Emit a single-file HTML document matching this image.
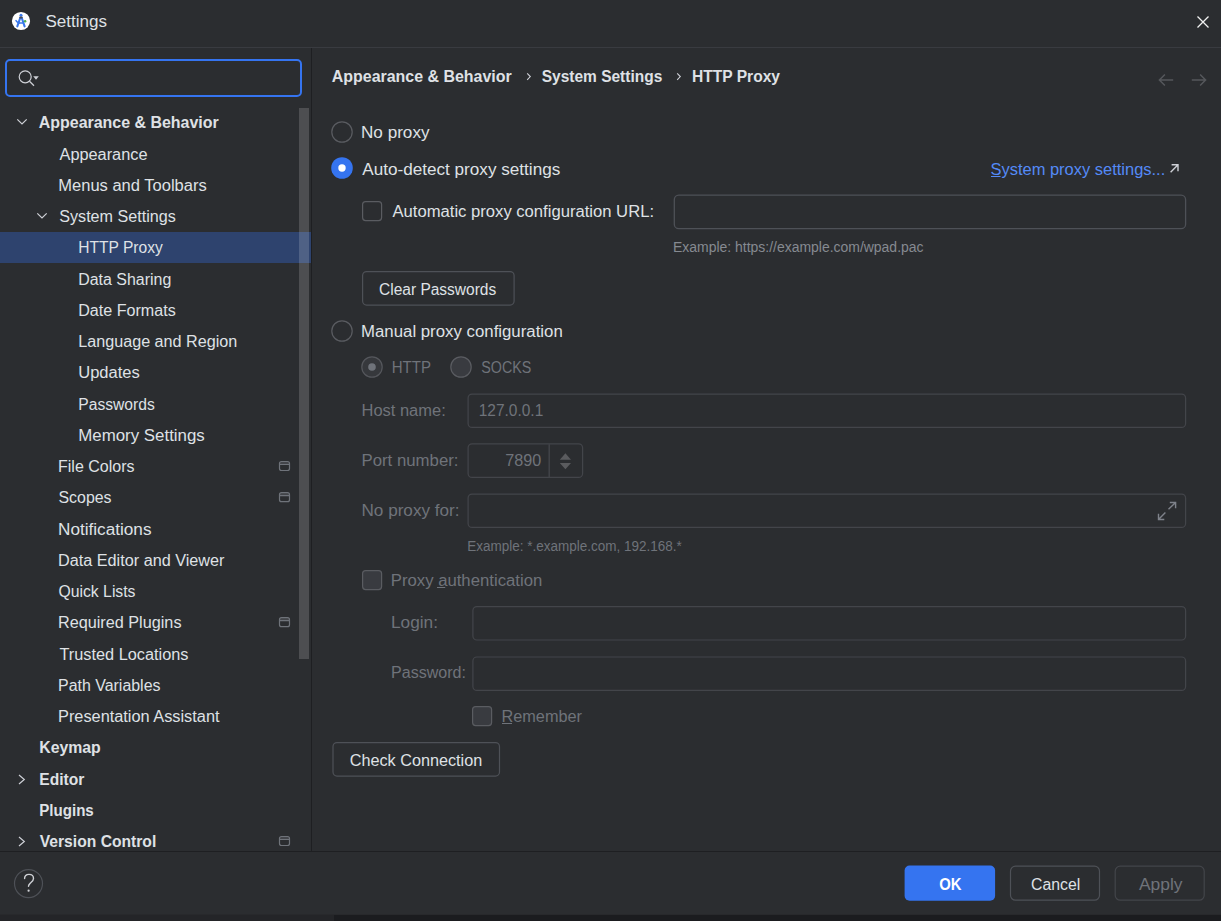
<!DOCTYPE html>
<html><head><meta charset="utf-8"><title>Settings</title>
<style>html,body{margin:0;padding:0;background:#2B2D30;overflow:hidden;width:1221px;height:921px}svg{display:block}text{font-family:"Liberation Sans",sans-serif}</style></head>
<body><svg width="1221" height="921" viewBox="0 0 1221 921">
<rect x="0" y="0" width="1221" height="921" fill="#2B2D30"/>
<!-- bottom strip -->
<rect x="0" y="915" width="334" height="6" fill="#242528"/>
<rect x="334" y="915" width="887" height="6" fill="#1B1C1F"/>
<rect x="0" y="914" width="1221" height="1" fill="#28292C"/>
<!-- title bar -->
<circle cx="21" cy="21" r="9.1" fill="#FFFFFF"/>
<g stroke="#3A78EC" stroke-linecap="round" fill="none">
  <path d="M20.2 18 L17.3 26.3 M21.8 18 L24.6 26.3" stroke-width="2.1"/>
  <path d="M18.6 22.9 H23.4" stroke-width="1.5"/>
  <path d="M16 20.6 Q17.2 22.6 19 22.9" stroke-width="1.5"/>
</g>
<circle cx="21" cy="15.2" r="1.5" fill="#3A78EC"/>
<rect x="19.3" y="16.4" width="3.4" height="2.2" rx="0.8" fill="#4A4D55"/>
<circle cx="25.1" cy="21.3" r="1.25" fill="#4CAF50"/>
<path d="M1197.5 16.5 L1208.5 27.5 M1208.5 16.5 L1197.5 27.5" stroke="#F2F2F2" stroke-width="1.3"/>
<rect x="0" y="47" width="1221" height="1" fill="#393B40"/>
<!-- search -->
<rect x="6" y="60" width="295" height="36" rx="4" ry="4" fill="#2B2D30" stroke="#3574F0" stroke-width="2"/>
<circle cx="25.2" cy="76.8" r="6" fill="none" stroke="#CED0D6" stroke-width="1.2"/>
<path d="M29.5 81.3 L34 85.8" stroke="#CED0D6" stroke-width="1.3"/>
<path d="M33.2 76.3 L38.8 76.3 L36 79.7 Z" fill="#CED0D6"/>
<!-- tree selection -->
<rect x="0" y="232" width="311" height="31" fill="#2E436E"/>
<!-- scrollbar thumb -->
<rect x="299" y="108" width="10" height="551" fill="#FFFFFF" fill-opacity="0.16"/>
<!-- tree separator -->
<rect x="311" y="48" width="1" height="803" fill="#1E1F22"/>
<!-- chevrons -->
<g stroke="#CED0D6" stroke-width="1.2" fill="none">
  <path d="M17.3 119.3 L22 124 L26.7 119.3"/>
  <path d="M37.3 213.3 L42 218 L46.7 213.3"/>
  <path d="M19 775 L24.3 779.5 L19 784"/>
  <path d="M19 837 L24.3 841.5 L19 846"/>
</g>
<!-- project icons -->
<g fill="#6F737A" fill-opacity="0.35"><rect x="280" y="462" width="9" height="2.5"/><rect x="280" y="493.2" width="9" height="2.5"/><rect x="280" y="618.2" width="9" height="2.5"/><rect x="280" y="837" width="9" height="2.5"/></g>
<g fill="none" stroke="#6F737A" stroke-width="1.2">
  <rect x="279.5" y="461.5" width="10" height="9" rx="2"/>
  <rect x="279.5" y="492.7" width="10" height="9" rx="2"/>
  <rect x="279.5" y="617.7" width="10" height="9" rx="2"/>
  <rect x="279.5" y="836.5" width="10" height="9" rx="2"/>
  <path d="M279.5 464.5 H289.5 M279.5 495.7 H289.5 M279.5 620.7 H289.5 M279.5 839.5 H289.5"/>
</g>
<!-- footer line -->
<rect x="0" y="851" width="1221" height="1" fill="#1E1F22"/>
<!-- breadcrumb separators -->
<g stroke="#CED0D6" stroke-width="1.1" fill="none">
  <path d="M527.2 73.3 L530.3 76.6 L527.2 79.9"/>
  <path d="M677.2 73.3 L680.3 76.6 L677.2 79.9"/>
</g>
<!-- nav arrows -->
<g stroke="#55575B" stroke-width="1.5" fill="none">
  <path d="M1173.2 80 H1159.8 M1164.9 74.5 L1159.4 80 L1164.9 85.5"/>
  <path d="M1191.8 80 H1205.2 M1200.1 74.5 L1205.6 80 L1200.1 85.5"/>
</g>
<!-- radios -->
<circle cx="342" cy="132" r="10.2" fill="none" stroke="#5A5C61" stroke-width="1.2"/>
<circle cx="342" cy="168" r="10.8" fill="#3574F0"/>
<circle cx="342" cy="168" r="3.7" fill="#FFFFFF"/>
<circle cx="342" cy="331" r="10.2" fill="none" stroke="#5A5C61" stroke-width="1.2"/>
<circle cx="372" cy="367" r="10.2" fill="#36383C" stroke="#55575C" stroke-width="1.2"/>
<circle cx="372" cy="367" r="3.8" fill="#6F737A"/>
<circle cx="461" cy="367" r="10.2" fill="#393B40" stroke="#5A5C61" stroke-width="1.2"/>
<!-- link arrow -->
<path d="M1170.6 172.2 L1178 164.8 M1171.6 164.8 H1178 V171.2" stroke="#CED0D6" stroke-width="1.4" fill="none"/>
<rect x="991" y="176" width="9.5" height="1" fill="#548AF7"/>
<!-- checkboxes -->
<rect x="362.6" y="201.6" width="19" height="19" rx="3" fill="none" stroke="#5A5C61" stroke-width="1.2"/>
<rect x="362.6" y="570.6" width="19" height="19" rx="3" fill="#393B40" stroke="#5A5C61" stroke-width="1.2"/>
<rect x="472.6" y="706.6" width="19" height="19" rx="3" fill="#393B40" stroke="#5A5C61" stroke-width="1.2"/>
<rect x="437" y="587" width="8.2" height="1" fill="#6F737A"/>
<rect x="502" y="723" width="10" height="1" fill="#6F737A"/>
<!-- fields -->
<rect x="674.3" y="195.2" width="511.3" height="33.5" rx="4.5" fill="none" stroke="#4E5157" stroke-width="1.3"/>
<rect x="468.1" y="394.1" width="717.5" height="33.3" rx="4" fill="none" stroke="#43454A" stroke-width="1.2"/>
<rect x="468.1" y="443.8" width="114.5" height="33.6" rx="4" fill="none" stroke="#43454A" stroke-width="1.2"/>
<rect x="548.5" y="444.2" width="1.4" height="33" fill="#43454A"/>
<path d="M559.8 459.7 L565.4 453.2 L571 459.7 Z M559.8 463 L565.4 469.2 L571 463 Z" fill="#5A5B5E"/>
<rect x="468.1" y="494.1" width="717.5" height="33.3" rx="4" fill="none" stroke="#43454A" stroke-width="1.2"/>
<g stroke="#7E828A" stroke-width="1.4" fill="none">
  <path d="M1168.5 509.3 L1175.6 502.4 M1169.8 502.5 H1175.6 V508.2"/>
  <path d="M1165.4 512.6 L1158.5 519.5 M1158.5 513.7 V519.5 H1164.3"/>
</g>
<rect x="472.9" y="606.6" width="712.7" height="33.4" rx="4" fill="none" stroke="#43454A" stroke-width="1.2"/>
<rect x="472.9" y="657" width="712.7" height="33.4" rx="4" fill="none" stroke="#43454A" stroke-width="1.2"/>
<!-- buttons -->
<rect x="362.6" y="271.6" width="151.5" height="33.5" rx="4" fill="none" stroke="#4E5157" stroke-width="1.2"/>
<rect x="333" y="742.6" width="166.5" height="33.5" rx="4" fill="none" stroke="#4E5157" stroke-width="1.2"/>
<rect x="904.6" y="865.5" width="90.5" height="35.3" rx="5" fill="#3574F0"/>
<rect x="1010.5" y="866.2" width="89" height="34" rx="5" fill="none" stroke="#4E5157" stroke-width="1.2"/>
<rect x="1115.2" y="866.2" width="89" height="34" rx="5" fill="none" stroke="#43454A" stroke-width="1.2"/>
<!-- help -->
<circle cx="28.5" cy="883.6" r="14" fill="none" stroke="#4E5157" stroke-width="1.2"/>
<path d="M24.6 878.6 C24.6 876 26.6 874.4 29 874.4 C31.6 874.4 33.5 876.1 33.5 878.4 C33.5 880.6 31.8 881.7 30.2 883.2 C29 884.4 28.5 885.2 28.5 886.2" fill="none" stroke="#CFD1D6" stroke-width="1.4" stroke-linecap="round"/>
<circle cx="28.6" cy="890.7" r="1.1" fill="#CFD1D6"/>
<text x="45.50" y="27.00" textLength="61.50" lengthAdjust="spacingAndGlyphs" font-size="16" font-weight="400" fill="#DFE1E5">Settings</text><text x="38.75" y="128.00" textLength="180.00" lengthAdjust="spacingAndGlyphs" font-size="16" font-weight="700" fill="#DFE1E5">Appearance &amp; Behavior</text><text x="59.50" y="160.00" textLength="88.00" lengthAdjust="spacingAndGlyphs" font-size="16" font-weight="400" fill="#DFE1E5">Appearance</text><text x="58.25" y="191.00" textLength="148.50" lengthAdjust="spacingAndGlyphs" font-size="16" font-weight="400" fill="#DFE1E5">Menus and Toolbars</text><text x="59.25" y="222.00" textLength="116.50" lengthAdjust="spacingAndGlyphs" font-size="16" font-weight="400" fill="#DFE1E5">System Settings</text><text x="78.25" y="253.00" textLength="84.50" lengthAdjust="spacingAndGlyphs" font-size="16" font-weight="400" fill="#DFE1E5">HTTP Proxy</text><text x="78.25" y="285.00" textLength="93.00" lengthAdjust="spacingAndGlyphs" font-size="16" font-weight="400" fill="#DFE1E5">Data Sharing</text><text x="78.25" y="316.00" textLength="97.50" lengthAdjust="spacingAndGlyphs" font-size="16" font-weight="400" fill="#DFE1E5">Date Formats</text><text x="78.25" y="347.00" textLength="159.00" lengthAdjust="spacingAndGlyphs" font-size="16" font-weight="400" fill="#DFE1E5">Language and Region</text><text x="78.25" y="378.00" textLength="61.50" lengthAdjust="spacingAndGlyphs" font-size="16" font-weight="400" fill="#DFE1E5">Updates</text><text x="78.25" y="410.00" textLength="76.50" lengthAdjust="spacingAndGlyphs" font-size="16" font-weight="400" fill="#DFE1E5">Passwords</text><text x="78.25" y="441.00" textLength="126.50" lengthAdjust="spacingAndGlyphs" font-size="16" font-weight="400" fill="#DFE1E5">Memory Settings</text><text x="58.00" y="472.00" textLength="76.50" lengthAdjust="spacingAndGlyphs" font-size="16" font-weight="400" fill="#DFE1E5">File Colors</text><text x="58.50" y="503.00" textLength="53.00" lengthAdjust="spacingAndGlyphs" font-size="16" font-weight="400" fill="#DFE1E5">Scopes</text><text x="58.00" y="535.00" textLength="93.50" lengthAdjust="spacingAndGlyphs" font-size="16" font-weight="400" fill="#DFE1E5">Notifications</text><text x="58.00" y="566.00" textLength="166.50" lengthAdjust="spacingAndGlyphs" font-size="16" font-weight="400" fill="#DFE1E5">Data Editor and Viewer</text><text x="58.50" y="597.00" textLength="77.00" lengthAdjust="spacingAndGlyphs" font-size="16" font-weight="400" fill="#DFE1E5">Quick Lists</text><text x="58.00" y="628.00" textLength="123.50" lengthAdjust="spacingAndGlyphs" font-size="16" font-weight="400" fill="#DFE1E5">Required Plugins</text><text x="59.50" y="660.00" textLength="129.00" lengthAdjust="spacingAndGlyphs" font-size="16" font-weight="400" fill="#DFE1E5">Trusted Locations</text><text x="58.00" y="691.00" textLength="102.50" lengthAdjust="spacingAndGlyphs" font-size="16" font-weight="400" fill="#DFE1E5">Path Variables</text><text x="58.00" y="722.00" textLength="161.50" lengthAdjust="spacingAndGlyphs" font-size="16" font-weight="400" fill="#DFE1E5">Presentation Assistant</text><text x="39.25" y="753.00" textLength="61.50" lengthAdjust="spacingAndGlyphs" font-size="16" font-weight="700" fill="#DFE1E5">Keymap</text><text x="39.25" y="785.00" textLength="45.00" lengthAdjust="spacingAndGlyphs" font-size="16" font-weight="700" fill="#DFE1E5">Editor</text><text x="39.25" y="816.00" textLength="54.50" lengthAdjust="spacingAndGlyphs" font-size="16" font-weight="700" fill="#DFE1E5">Plugins</text><text x="39.75" y="847.00" textLength="116.50" lengthAdjust="spacingAndGlyphs" font-size="16" font-weight="700" fill="#DFE1E5">Version Control</text><text x="331.75" y="82.00" textLength="180.00" lengthAdjust="spacingAndGlyphs" font-size="16" font-weight="700" fill="#DFE1E5">Appearance &amp; Behavior</text><text x="541.75" y="82.00" textLength="120.50" lengthAdjust="spacingAndGlyphs" font-size="16" font-weight="700" fill="#DFE1E5">System Settings</text><text x="692.00" y="82.00" textLength="88.00" lengthAdjust="spacingAndGlyphs" font-size="16" font-weight="700" fill="#DFE1E5">HTTP Proxy</text><text x="361.00" y="138.00" textLength="68.50" lengthAdjust="spacingAndGlyphs" font-size="16" font-weight="400" fill="#DFE1E5">No proxy</text><text x="362.25" y="175.00" textLength="198.00" lengthAdjust="spacingAndGlyphs" font-size="16" font-weight="400" fill="#DFE1E5">Auto-detect proxy settings</text><text x="990.50" y="175.00" textLength="174.75" lengthAdjust="spacingAndGlyphs" font-size="16" font-weight="400" fill="#548AF7">System proxy settings...</text><text x="392.50" y="217.00" textLength="261.50" lengthAdjust="spacingAndGlyphs" font-size="16" font-weight="400" fill="#DFE1E5">Automatic proxy configuration URL:</text><text x="673.00" y="252.00" textLength="250.50" lengthAdjust="spacingAndGlyphs" font-size="14" font-weight="400" fill="#868A91">Example: https://example.com/wpad.pac</text><text x="379.00" y="295.00" textLength="117.25" lengthAdjust="spacingAndGlyphs" font-size="16" font-weight="400" fill="#DFE1E5">Clear Passwords</text><text x="361.00" y="337.00" textLength="201.75" lengthAdjust="spacingAndGlyphs" font-size="16" font-weight="400" fill="#DFE1E5">Manual proxy configuration</text><text x="391.75" y="373.00" textLength="39.25" lengthAdjust="spacingAndGlyphs" font-size="16" font-weight="400" fill="#6F737A">HTTP</text><text x="481.25" y="373.00" textLength="50.00" lengthAdjust="spacingAndGlyphs" font-size="16" font-weight="400" fill="#6F737A">SOCKS</text><text x="361.50" y="416.00" textLength="84.25" lengthAdjust="spacingAndGlyphs" font-size="16" font-weight="400" fill="#6F737A">Host name:</text><text x="478.75" y="416.00" textLength="64.50" lengthAdjust="spacingAndGlyphs" font-size="16" font-weight="400" fill="#6F737A">127.0.0.1</text><text x="361.50" y="466.00" textLength="97.00" lengthAdjust="spacingAndGlyphs" font-size="16" font-weight="400" fill="#6F737A">Port number:</text><text x="505.25" y="466.00" textLength="36.00" lengthAdjust="spacingAndGlyphs" font-size="16" font-weight="400" fill="#6F737A">7890</text><text x="361.50" y="516.00" textLength="98.00" lengthAdjust="spacingAndGlyphs" font-size="16" font-weight="400" fill="#6F737A">No proxy for:</text><text x="467.20" y="551.00" textLength="214.50" lengthAdjust="spacingAndGlyphs" font-size="14" font-weight="400" fill="#6F737A">Example: *.example.com, 192.168.*</text><text x="390.75" y="586.00" textLength="151.50" lengthAdjust="spacingAndGlyphs" font-size="16" font-weight="400" fill="#6F737A">Proxy authentication</text><text x="391.00" y="628.00" textLength="47.00" lengthAdjust="spacingAndGlyphs" font-size="16" font-weight="400" fill="#6F737A">Login:</text><text x="391.00" y="678.00" textLength="75.00" lengthAdjust="spacingAndGlyphs" font-size="16" font-weight="400" fill="#6F737A">Password:</text><text x="501.50" y="722.00" textLength="80.50" lengthAdjust="spacingAndGlyphs" font-size="16" font-weight="400" fill="#6F737A">Remember</text><text x="349.75" y="766.00" textLength="132.50" lengthAdjust="spacingAndGlyphs" font-size="16" font-weight="400" fill="#DFE1E5">Check Connection</text><text x="939.25" y="890.00" textLength="22.25" lengthAdjust="spacingAndGlyphs" font-size="16" font-weight="700" fill="#FFFFFF">OK</text><text x="1031.00" y="890.00" textLength="49.25" lengthAdjust="spacingAndGlyphs" font-size="16" font-weight="400" fill="#DFE1E5">Cancel</text><text x="1139.00" y="890.00" textLength="43.50" lengthAdjust="spacingAndGlyphs" font-size="16" font-weight="400" fill="#6F737A">Apply</text>
</svg></body></html>
